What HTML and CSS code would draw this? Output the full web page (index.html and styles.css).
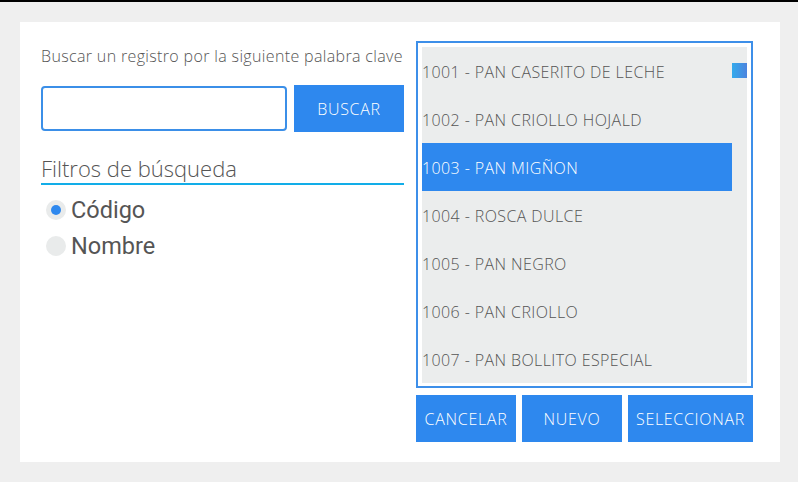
FILE: index.html
```html
<!DOCTYPE html>
<html lang="es">
<head>
<meta charset="utf-8">
<title>Buscar registro</title>
<link rel="stylesheet" href="styles.css">
</head>
<body>
<div class="topbar"></div>
<div class="panel">
  <div class="left">
    <div class="label">Buscar un registro por la siguiente palabra clave</div>
    <div class="search-row">
      <input class="search-input" type="text">
      <button class="btn btn-buscar">BUSCAR</button>
    </div>
    <div class="filters-title">Filtros de búsqueda</div>
    <div class="radios">
      <div class="radio-row"><span class="radio checked"></span><span class="radio-text">Código</span></div>
      <div class="radio-row"><span class="radio"></span><span class="radio-text">Nombre</span></div>
    </div>
  </div>
  <div class="right">
    <div class="listbox">
      <div class="list-inner">
        <div class="items">
          <div class="item">1001 - PAN CASERITO DE LECHE</div>
          <div class="item">1002 - PAN CRIOLLO HOJALD</div>
          <div class="item selected">1003 - PAN MIGÑON</div>
          <div class="item">1004 - ROSCA DULCE</div>
          <div class="item">1005 - PAN NEGRO</div>
          <div class="item">1006 - PAN CRIOLLO</div>
          <div class="item">1007 - PAN BOLLITO ESPECIAL</div>
        </div>
        <div class="scrollbar"><div class="thumb"></div></div>
      </div>
    </div>
    <div class="actions">
      <button class="btn btn-cancel">CANCELAR</button>
      <button class="btn btn-new">NUEVO</button>
      <button class="btn btn-select">SELECCIONAR</button>
    </div>
  </div>
</div>
</body>
</html>
```

FILE: styles.css
```css
* { box-sizing: border-box; }
html, body { margin: 0; padding: 0; }
body {
  background: #efefef;
  font-family: "Open Sans", "Liberation Sans", sans-serif;
  font-weight: 300;
  color: #555;
  width: 798px;
  height: 482px;
  overflow: hidden;
}
.topbar { height: 2px; background: #000; }
.panel {
  margin: 20px 0 0 20px;
  width: 760px;
  height: 440px;
  background: #fff;
  padding: 20px 27px 0 21px;
  display: flex;
  gap: 12px;
}
.left { width: 363px; display: flex; flex-direction: column; }
.label {
  margin-top: 4px;
  font-size: 16px;
  letter-spacing: 0.35px;
  line-height: 20px;
  color: #555;
  white-space: nowrap;
}
.search-row {
  margin-top: 19px;
  display: flex;
  align-items: center;
  gap: 7px;
  height: 47px;
}
.search-input {
  width: 246px;
  height: 45px;
  border: 2px solid #3b8fe8;
  border-radius: 4px;
  background: #fff;
  outline: none;
  margin: 0;
}
.btn {
  border: 0;
  margin: 0;
  padding: 0;
  background: #2e88ee;
  color: #fff;
  font-family: "Open Sans", "Liberation Sans", sans-serif;
  font-weight: 300;
  font-size: 16px;
  letter-spacing: 0.7px;
  height: 47px;
  padding-top: 1px;
}
.btn-buscar { width: 110px; }
.filters-title {
  margin-top: 22px;
  font-size: 22px;
  line-height: 28px;
  padding-bottom: 1px;
  border-bottom: 2px solid #12ade8;
  color: #555;
}
.radios { margin-top: 7px; }
.radio-row {
  height: 36px;
  display: flex;
  align-items: center;
  padding-left: 5px;
}
.radio {
  width: 20px;
  height: 20px;
  border-radius: 50%;
  background: #e9ebeb;
  display: flex;
  align-items: center;
  justify-content: center;
  margin-right: 5px;
}
.radio.checked::after {
  content: "";
  width: 10px;
  height: 10px;
  border-radius: 50%;
  background: #2e88ee;
}
.radio-text {
  font-family: Roboto, "Liberation Sans", sans-serif;
  font-weight: 400;
  font-size: 23.5px;
  color: #555;
}
.right { width: 337px; display: flex; flex-direction: column; }
.listbox {
  width: 337px;
  height: 347px;
  border: 2px solid #3d8fe9;
  padding: 4px;
  background: #fff;
  margin-top: -1px;
}
.list-inner {
  display: flex;
  height: 336px;
  background: #ebeded;
}
.items { width: 310px; }
.item {
  height: 48px;
  line-height: 50px;
  font-size: 16px;
  letter-spacing: 0.4px;
  color: #555;
  white-space: nowrap;
}
.item.selected { background: #2e88ee; color: #fff; }
.scrollbar { width: 15px; padding-top: 16px; }
.thumb {
  width: 15px;
  height: 15px;
  background: linear-gradient(to right, #33aaec, #4d84de);
}
.actions {
  margin-top: 7px;
  display: flex;
  gap: 6px;
}
.btn-cancel, .btn-new { width: 100px; }
.btn-select { width: 125px; }
```
